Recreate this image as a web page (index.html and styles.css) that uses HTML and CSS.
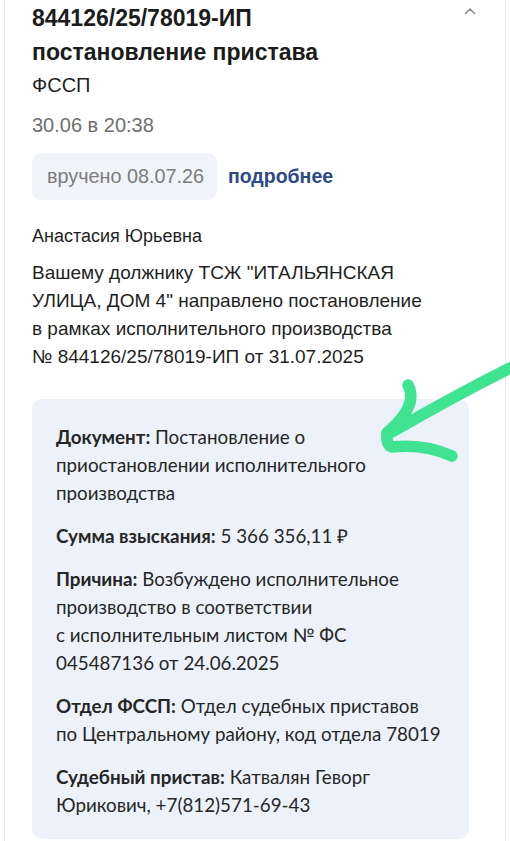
FILE: index.html
```html
<!DOCTYPE html>
<html lang="ru">
<head>
<meta charset="utf-8">
<title>Постановление пристава</title>
<link rel="stylesheet" href="styles.css">
</head>
<body>
<div class="page">
  <div class="card">
    <div class="head">
      <h1 class="title">844126/25/78019-ИП<br>постановление пристава</h1>
      <svg class="chevron" width="12" height="8" viewBox="0 0 12 8"><polyline points="1.5,6.5 6,2 10.5,6.5" fill="none" stroke="#8a8a8a" stroke-width="1.6" stroke-linecap="round" stroke-linejoin="round"/></svg>
    </div>
    <div class="sender">ФССП</div>
    <div class="date">30.06 в 20:38</div>
    <div class="status-row">
      <span class="pill">вручено 08.07.26</span>
      <a class="more" href="#">подробнее</a>
    </div>
    <p class="greet">Анастасия Юрьевна</p>
    <p class="msg">Вашему должнику ТСЖ "ИТАЛЬЯНСКАЯ<br>УЛИЦА, ДОМ 4" направлено постановление<br>в рамках исполнительного производства<br>№ 844126/25/78019-ИП от 31.07.2025</p>
    <div class="details">
      <p class="item"><b>Документ:</b> Постановление о<br>приостановлении исполнительного<br>производства</p>
      <p class="item"><b>Сумма взыскания:</b> 5 366 356,11 ₽</p>
      <p class="item"><b>Причина:</b> Возбуждено исполнительное<br>производство в соответствии<br>с исполнительным листом № ФС<br>045487136 от 24.06.2025</p>
      <p class="item"><b>Отдел ФССП:</b> Отдел судебных приставов<br>по Центральному району, код отдела 78019</p>
      <p class="item"><b>Судебный пристав:</b> Катвалян Геворг<br>Юрикович, +7(812)571-69-43</p>
    </div>
  </div>
  <svg class="arrow" width="510" height="841" viewBox="0 0 510 841">
    <g fill="none" stroke="#3fe391" stroke-width="11.5" stroke-linecap="round" stroke-linejoin="round">
      <path d="M514 366 C 470 388, 430 410, 392 432"/>
      <path d="M408 385 C 414 396, 410 408, 400 420 C 395 426, 390 430, 387 433"/>
      <path d="M387 433 C 386 440, 388 446, 392 447 C 410 445, 430 446, 452 456"/>
    </g>
  </svg>
</div>
</body>
</html>
```

FILE: styles.css
```css
html, body {
  margin: 0;
  padding: 0;
  background: #ffffff;
}

.page {
  position: relative;
  width: 510px;
  height: 841px;
  overflow: hidden;
}

.card {
  margin: 0 4px;
  height: 100%;
  box-sizing: border-box;
  border-left: 1px solid #ececec;
  border-right: 1px solid #ececec;
  padding: 1px 36px 0 27px;
  font-family: "Liberation Sans", Arial, sans-serif;
  color: #1f1f1f;
}

.head {
  display: flex;
  justify-content: space-between;
  align-items: flex-start;
}

.title {
  margin: 0;
  font-size: 23px;
  line-height: 34px;
  font-weight: 700;
  color: #1c1c1c;
}

.chevron {
  margin-top: 6px;
  margin-right: -7px;
}

.sender {
  margin-top: 2px;
  font-size: 20px;
  line-height: 28px;
}

.date {
  margin-top: 12px;
  font-size: 20px;
  line-height: 28px;
  color: #6f6f6f;
}

.status-row {
  margin-top: 14px;
  display: flex;
  align-items: center;
  gap: 11px;
}

.pill {
  display: inline-flex;
  align-items: center;
  height: 47px;
  padding: 0 13px 0 15px;
  background: #f1f4f9;
  border-radius: 9px;
  font-size: 19.8px;
  color: #7c7c7c;
}

.more {
  font-size: 19.5px;
  font-weight: 700;
  color: #2c4a86;
  text-decoration: none;
}

.greet {
  margin: 22px 0 0;
  font-size: 18px;
  line-height: 28px;
}

.msg {
  margin: 9px 0 0;
  font-size: 19px;
  line-height: 28px;
}

.details {
  margin-top: 28px;
  background: #edf2fa;
  border-radius: 10px;
  padding: 24px 24px 20px;
  font-family: Lato, "Liberation Sans", sans-serif;
  font-size: 18.8px;
  line-height: 28px;
  color: #262626;
}

.item {
  margin: 0;
}

.item + .item {
  margin-top: 15px;
}

.item b {
  font-weight: 700;
}

.arrow {
  position: absolute;
  left: 0;
  top: 0;
  pointer-events: none;
}
```
